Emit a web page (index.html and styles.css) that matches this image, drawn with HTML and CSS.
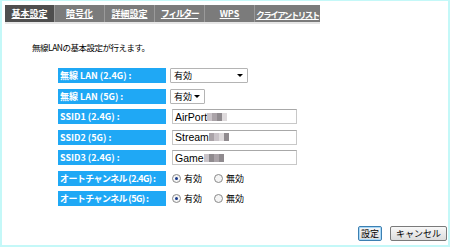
FILE: index.html
```html
<!DOCTYPE html>
<html lang="ja">
<head>
<meta charset="utf-8">
<link rel="stylesheet" href="styles.css">
</head>
<body>
<div class="page">
  <div class="tabs">
    <a class="tab active">基本設定</a>
    <a class="tab">暗号化</a>
    <a class="tab">詳細設定</a>
    <a class="tab kana">フィルター</a>
    <a class="tab">WPS</a>
    <a class="tab kana last">クライアントリスト</a>
  </div>
  <div class="tabshadow"></div>
  <p class="desc">無線LANの基本設定が行えます。</p>
  <div class="form">
    <div class="row">
      <div class="label">無線 LAN (2.4G) :</div>
      <div class="field"><span class="select wide">有効<span class="arrow"></span></span></div>
    </div>
    <div class="row">
      <div class="label">無線 LAN (5G) :</div>
      <div class="field"><span class="select narrow">有効<span class="arrow"></span></span></div>
    </div>
    <div class="row">
      <div class="label">SSID1 (2.4G) :</div>
      <div class="field"><span class="text">AirPort<span class="blur b1"></span><span class="blur b2"></span><span class="blur b3"></span><span class="blur b4"></span></span></div>
    </div>
    <div class="row">
      <div class="label">SSID2 (5G) :</div>
      <div class="field"><span class="text">Stream<span class="blur b2"></span><span class="blur b1"></span><span class="blur b4"></span><span class="blur b3"></span></span></div>
    </div>
    <div class="row">
      <div class="label">SSID3 (2.4G) :</div>
      <div class="field"><span class="text">Game<span class="blur b1"></span><span class="blur b3"></span><span class="blur b2"></span><span class="blur b3"></span></span></div>
    </div>
    <div class="row">
      <div class="label kana">オートチャンネル (2.4G) :</div>
      <div class="field radios"><span class="radio on"></span>有効<span class="radio second"></span>無効</div>
    </div>
    <div class="row">
      <div class="label kana">オートチャンネル (5G) :</div>
      <div class="field radios"><span class="radio on"></span>有効<span class="radio second"></span>無効</div>
    </div>
  </div>
  <div class="buttons">
    <button class="btn primary">設定</button>
    <button class="btn cancel">キャンセル</button>
  </div>
</div>
</body>
</html>
```

FILE: styles.css
```css
html, body {
  margin: 0;
  padding: 0;
  background: #fff;
}
body {
  font-family: "Noto Sans CJK JP", "DejaVu Sans", sans-serif;
  font-size: 10px;
  color: #000;
}
.page {
  box-sizing: border-box;
  width: 450px;
  height: 247px;
  border: 2px solid #c4f8f8;
  border-top-width: 1px;
  position: relative;
}
.tabs {
  display: flex;
  margin: 4px 0 0 3px;
  width: 315px;
  height: 17px;
  background: #7b7b7b;
}
.tab {
  display: flex;
  align-items: center;
  justify-content: center;
  width: 50px;
  height: 17px;
  color: #fff;
  font-weight: bold;
  font-size: 9px;
  text-decoration: underline;
  border-right: 1px solid #9a9a9a;
  box-sizing: border-box;
  white-space: nowrap;
}
.tab.kana {
  letter-spacing: -1.5px;
}
.tab.active {
  background: #4e4e4e;
}
.tab.last {
  width: 65px;
  border-right: none;
  font-size: 8.5px;
}
.tabshadow {
  margin-left: 3px;
  width: 315px;
  height: 2px;
  background: #e6e6e6;
}
.desc {
  margin: 17px 0 0 30px;
  font-size: 8.5px;
  letter-spacing: -0.5px;
  line-height: 12px;
  height: 12px;
}
.form {
  margin: 15px 0 0 56px;
  display: flex;
  flex-direction: column;
  gap: 5.5px;
}
.row {
  display: flex;
  align-items: center;
  height: 15px;
}
.label {
  width: 108px;
  height: 15px;
  background: #1fa8f5;
  color: #fff;
  font-weight: bold;
  font-size: 9px;
  line-height: 15px;
  padding-left: 2px;
  box-sizing: border-box;
  white-space: pre;
}
.label.kana {
  letter-spacing: -0.6px;
}
.field {
  margin-left: 4px;
  display: flex;
  align-items: center;
  font-size: 9.5px;
}
.select {
  position: relative;
  box-sizing: border-box;
  height: 15px;
  border: 1px solid #b4b4b4;
  border-radius: 1px;
  padding-left: 3px;
  line-height: 13px;
  font-size: 9px;
  background: #fff;
}
.select.wide { width: 78px; }
.select.narrow { width: 35px; }
.arrow {
  position: absolute;
  right: 4px;
  top: 5px;
  width: 0;
  height: 0;
  border-left: 3px solid transparent;
  border-right: 3px solid transparent;
  border-top: 3px solid #000;
}
.text {
  display: flex;
  align-items: center;
  margin-left: 2px;
  box-sizing: border-box;
  width: 125px;
  height: 15px;
  border: 1px solid #c8c8c8;
  border-top-color: #a8a8a8;
  padding-left: 2px;
  font-family: "Liberation Sans", Arial, sans-serif;
  font-size: 10.5px;
}
.blur {
  display: inline-block;
  width: 5px;
  height: 8px;
}
.b1 { background: #c9c3c8; }
.b2 { background: #aaa3a8; }
.b3 { background: #8f8a8e; }
.b4 { background: #dedadc; }
.radios {
  margin-left: 6px;
  font-size: 9px;
}
.radio {
  display: inline-block;
  box-sizing: border-box;
  width: 9px;
  height: 9px;
  border-radius: 50%;
  border: 1px solid #8a8a8a;
  background: #f4f4f4;
  margin-right: 3px;
  position: relative;
}
.radio.on::after {
  content: "";
  position: absolute;
  left: 2px;
  top: 2px;
  width: 3px;
  height: 3px;
  border-radius: 50%;
  background: #1a3a8a;
}
.radio.second {
  margin-left: 12px;
}
.buttons {
  position: absolute;
  right: 1px;
  bottom: 4px;
  display: flex;
  gap: 8px;
}
.btn {
  font-family: "Noto Sans CJK JP", sans-serif;
  font-size: 9px;
  height: 15px;
  line-height: 11px;
  padding: 0;
  border: 1px solid #7a7a7a;
  border-radius: 2px;
  background: linear-gradient(#f8f8f8, #dcdcdc);
  color: #000;
  white-space: nowrap;
}
.btn.primary {
  border: 1px solid #3c7fb1;
  box-shadow: inset 0 0 0 1px #a8d8f8;
  width: 24px;
}
.btn.cancel {
  width: 57px;
}
```
